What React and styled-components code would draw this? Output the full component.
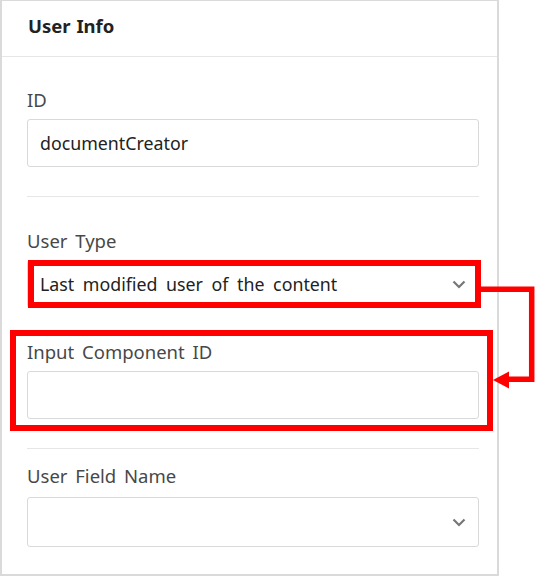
import React from "react";
import styled, { createGlobalStyle } from "styled-components";

const GlobalStyle = createGlobalStyle`
  html, body {
    margin: 0;
    padding: 0;
    background: #ffffff;
  }
  body {
    font-family: "Noto Sans", "Liberation Sans", sans-serif;
  }
`;

const Page = styled.div`
  position: relative;
  width: 536px;
  height: 576px;
  background: #fff;
`;

const Panel = styled.div`
  width: 499px;
  height: 576px;
  box-sizing: border-box;
  border: 2px solid #dadada;
  border-top-width: 1px;
  background: #fff;
`;

const Header = styled.div`
  height: 56px;
  box-sizing: border-box;
  padding: 13px 26px 0;
  border-bottom: 1px solid #e6e6e6;
  font-size: 18.5px;
  line-height: 24px;
  font-weight: 700;
  word-spacing: 1px;
  color: #222;
`;

const Body = styled.div`
  padding: 0 18px 0 25px;
`;

const Section = styled.div`
  padding: ${(p) => p.$top}px 0 ${(p) => p.$bottom}px;
  border-bottom: ${(p) => (p.$last ? "none" : "1px solid #e6e6e6")};
`;

const Field = styled.div`
  position: relative;
  display: flex;
  flex-direction: column;
  gap: ${(p) => p.$gap || 7}px;

  & + & {
    margin-top: 32px;
  }

  ${(p) =>
    p.$marked &&
    `
    &::after {
      content: "";
      position: absolute;
      inset: -10px -14px -12px -17px;
      border: 6px solid #ff0000;
      pointer-events: none;
    }
  `}
`;

const Label = styled.label`
  font-size: 18.5px;
  line-height: 24px;
  word-spacing: 3px;
  color: #484848;
`;

const Box = styled.div`
  position: relative;
  height: ${(p) => p.$h || 48}px;
  box-sizing: border-box;
  display: flex;
  align-items: center;
  padding: 0 40px 0 12px;
  border: 1px solid #d9d9d9;
  border-radius: 3px;
  font-size: 17.8px;
  word-spacing: 4px;
  color: #222;
  background: #fff;

  ${(p) =>
    p.$marked &&
    `
    &::after {
      content: "";
      position: absolute;
      inset: -1px -3px -1px 0px;
      border: 6px solid #ff0000;
      pointer-events: none;
    }
  `}
`;

const Chevron = styled.svg`
  position: absolute;
  right: 12px;
  top: 50%;
  width: 14px;
  height: 9px;
  margin-top: -4px;
`;

const Connector = styled.svg`
  position: absolute;
  left: 0;
  top: 0;
  width: 536px;
  height: 576px;
  pointer-events: none;
`;

const Caret = () => (
  <Chevron viewBox="0 0 14 9">
    <path d="M1.5 1.5 L7 7 L12.5 1.5" fill="none" stroke="#777" strokeWidth="2.2" />
  </Chevron>
);

export default function App() {
  return (
    <Page>
      <GlobalStyle />
      <Panel>
        <Header>User Info</Header>
        <Body>
          <Section $top={31} $bottom={29}>
            <Field>
              <Label>ID</Label>
              <Box>documentCreator</Box>
            </Field>
          </Section>
          <Section $top={32} $bottom={29}>
            <Field>
              <Label>User Type</Label>
              <Box $marked>
                Last modified user of the content
                <Caret />
              </Box>
            </Field>
            <Field $marked>
              <Label>Input Component ID</Label>
              <Box />
            </Field>
          </Section>
          <Section $top={15} $bottom={0} $last>
            <Field $gap={9}>
              <Label>User Field Name</Label>
              <Box $h={50}>
                <Caret />
              </Box>
            </Field>
          </Section>
        </Body>
      </Panel>
      <Connector viewBox="0 0 536 576">
        <path
          d="M481 289.2 H531.7 V379.2 H506"
          fill="none"
          stroke="#ff0000"
          strokeWidth="5.5"
        />
        <polygon points="493,380 509,371.5 509,388.5" fill="#ff0000" />
      </Connector>
    </Page>
  );
}
